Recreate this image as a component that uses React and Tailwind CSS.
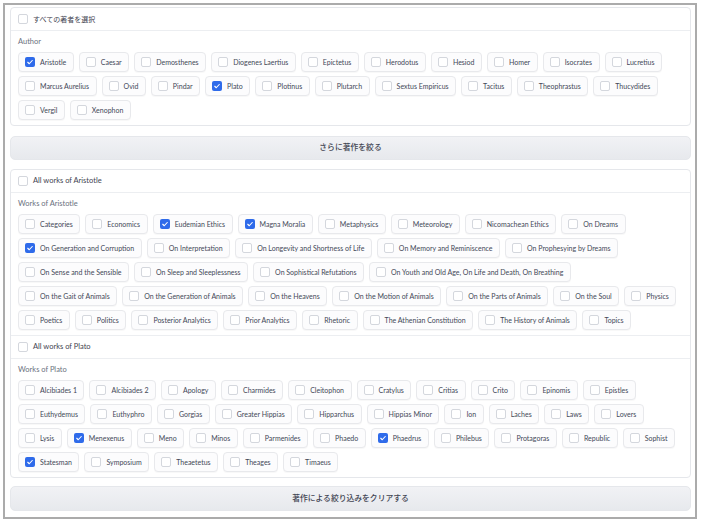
import React from 'react';

const authors = [
  [['Aristotle', true], ['Caesar'], ['Demosthenes'], ['Diogenes Laertius'], ['Epictetus'], ['Herodotus'], ['Hesiod'], ['Homer'], ['Isocrates'], ['Lucretius']],
  [['Marcus Aurelius'], ['Ovid'], ['Pindar'], ['Plato', true], ['Plotinus'], ['Plutarch'], ['Sextus Empiricus'], ['Tacitus'], ['Theophrastus'], ['Thucydides']],
  [['Vergil'], ['Xenophon']],
];

const aristotle = [
  [['Categories'], ['Economics'], ['Eudemian Ethics', true], ['Magna Moralia', true], ['Metaphysics'], ['Meteorology'], ['Nicomachean Ethics'], ['On Dreams']],
  [['On Generation and Corruption', true], ['On Interpretation'], ['On Longevity and Shortness of Life'], ['On Memory and Reminiscence'], ['On Prophesying by Dreams']],
  [['On Sense and the Sensible'], ['On Sleep and Sleeplessness'], ['On Sophistical Refutations'], ['On Youth and Old Age, On Life and Death, On Breathing']],
  [['On the Gait of Animals'], ['On the Generation of Animals'], ['On the Heavens'], ['On the Motion of Animals'], ['On the Parts of Animals'], ['On the Soul'], ['Physics']],
  [['Poetics'], ['Politics'], ['Posterior Analytics'], ['Prior Analytics'], ['Rhetoric'], ['The Athenian Constitution'], ['The History of Animals'], ['Topics']],
];

const plato = [
  [['Alcibiades 1'], ['Alcibiades 2'], ['Apology'], ['Charmides'], ['Cleitophon'], ['Cratylus'], ['Critias'], ['Crito'], ['Epinomis'], ['Epistles']],
  [['Euthydemus'], ['Euthyphro'], ['Gorgias'], ['Greater Hippias'], ['Hipparchus'], ['Hippias Minor'], ['Ion'], ['Laches'], ['Laws'], ['Lovers']],
  [['Lysis'], ['Menexenus', true], ['Meno'], ['Minos'], ['Parmenides'], ['Phaedo'], ['Phaedrus', true], ['Philebus'], ['Protagoras'], ['Republic'], ['Sophist']],
  [['Statesman', true], ['Symposium'], ['Theaetetus'], ['Theages'], ['Timaeus']],
];

function Box({ checked }) {
  if (checked) {
    return (
      <span className="flex-none w-[10px] h-[10px] rounded-[2px] bg-[#2f6bea] flex items-center justify-center">
        <svg viewBox="0 0 16 16" className="w-[8px] h-[8px]">
          <path d="M3.5 8.5l3 3L12.5 5" stroke="white" strokeWidth="2.2" fill="none" strokeLinecap="round" strokeLinejoin="round" />
        </svg>
      </span>
    );
  }
  return <span className="flex-none w-[10px] h-[10px] rounded-[2px] border border-[#d4d7dd] bg-white" />;
}

function Chip({ label, checked }) {
  return (
    <label className="flex-none flex items-center h-[20px] pl-[6px] pr-[6.5px] gap-[5px] border border-[#e8e9ec] rounded-[4px] bg-[#fcfcfd] shadow-[0_1px_1px_rgba(0,0,0,0.03)] text-[7px] text-[#434857] whitespace-nowrap">
      <Box checked={checked} />
      <span>{label}</span>
    </label>
  );
}

function Block({ all, title, rows, jp, last }) {
  return (
    <div className={last ? '' : 'border-b border-[#eceef1]'}>
      <div className="h-[23px] px-[7px] flex items-center gap-[5px] border-b border-[#eceef1]">
        <Box />
        <span className={jp ? 'text-[7px] text-[#3f4451]' : 'text-[7.5px] text-[#3f4451]'}>{all}</span>
      </div>
      <div className="px-[7px] pt-[6px] pb-[5px]">
        <div className="h-[10px] leading-[10px] mb-[5px] text-[7.5px] text-[#6b7280]">{title}</div>
        <div className="flex flex-col gap-y-[4px]">
          {rows.map((row, i) => (
            <div key={i} className="flex gap-x-[5px]">
              {row.map(([l, c]) => (
                <Chip key={l} label={l} checked={c} />
              ))}
            </div>
          ))}
        </div>
      </div>
    </div>
  );
}

function Button({ children, className }) {
  return (
    <div className={`flex items-center justify-center rounded-[5px] border border-[#e5e7eb] bg-gradient-to-b from-[#f1f2f5] to-[#e7e9ed] text-[7.8px] font-medium text-[#3f4451] ${className}`}>
      {children}
    </div>
  );
}

export default function App() {
  return (
    <div
      className="w-[702px] h-[522px] bg-white pt-[3px] pl-[3px]"
      style={{ fontFamily: 'Lato, "Noto Sans CJK JP", sans-serif' }}
    >
      <div className="w-[694px] h-[516px] border-2 border-[#ababab] pl-[5px] pr-[4px] pt-[2px] flex flex-col">
        <div className="border border-[#e5e7eb] rounded-[4px] bg-white">
          <Block all="すべての著者を選択" title="Author" rows={authors} jp last />
        </div>
        <Button className="mt-[10px] h-[24px]">さらに著作を絞る</Button>
        <div className="mt-[9px] border border-[#e5e7eb] rounded-[4px] bg-white">
          <Block all="All works of Aristotle" title="Works of Aristotle" rows={aristotle} />
          <Block all="All works of Plato" title="Works of Plato" rows={plato} last />
        </div>
        <Button className="mt-[8px] h-[25px]">著作による絞り込みをクリアする</Button>
      </div>
    </div>
  );
}
